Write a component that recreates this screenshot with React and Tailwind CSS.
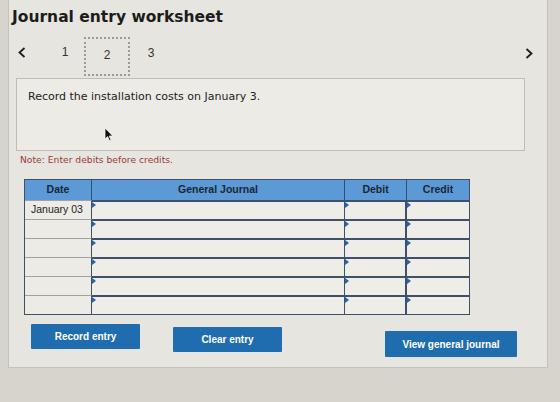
import React from "react";

const rows = ["January 03", "", "", "", "", ""];

function Marker() {
  return (
    <span className="absolute left-0 top-0 h-0 w-0 border-y-[3px] border-l-[4px] border-y-transparent border-l-[#2563b0]" />
  );
}

function Chevron({ dir }) {
  return (
    <svg width="8" height="11" viewBox="0 0 8 11" className="block">
      <polyline
        points={dir === "left" ? "6.5,1 1.5,5.5 6.5,10" : "1.5,1 6.5,5.5 1.5,10"}
        fill="none"
        stroke="#1d1d1d"
        strokeWidth="1.8"
        strokeLinejoin="miter"
      />
    </svg>
  );
}

export default function App() {
  return (
    <div className="relative h-[402px] w-[560px] overflow-hidden bg-[#d6d4cd] font-['Liberation_Sans',Arial,sans-serif] text-[#222]">
      <div className="ml-[8px] flex h-[368px] w-[540px] flex-col border-x border-b border-[#c4c2bb] bg-[#e7e5df]">
        {/* Heading */}
        <h1 className="mt-[8px] pl-[3px] font-['DejaVu_Sans',Verdana,sans-serif] text-[15.5px] font-bold leading-[18px] text-[#1c1c1c]">
          Journal entry worksheet
        </h1>

        {/* Step navigation */}
        <div className="mt-[11px] flex h-[39px] items-start">
          <div className="ml-[9px] mt-[10px]">
            <Chevron dir="left" />
          </div>
          <span className="ml-[32px] mt-[8px] w-[14px] text-center text-[12px] leading-[14px] text-[#333]">1</span>
          <div className="ml-[12px] flex h-[39px] w-[46px] justify-center border-2 border-dotted border-[#9a9a9a] pt-[9px] text-[12px] leading-[14px] text-[#333]">
            2
          </div>
          <span className="ml-[14px] mt-[9px] w-[14px] text-center text-[12px] leading-[14px] text-[#333]">3</span>
          <div className="ml-auto mr-[14px] mt-[11px]">
            <Chevron dir="right" />
          </div>
        </div>

        {/* Instruction box */}
        <div className="ml-[7px] mt-[2px] h-[73px] w-[509px] border border-[#bfbdb6] bg-[#ecebe6] pl-[11px] pt-[10px]">
          <p className="font-['DejaVu_Sans',Verdana,sans-serif] text-[11px] leading-[16px] text-[#222]">
            Record the installation costs on January 3.
          </p>
        </div>

        <p className="ml-[11px] mt-[2px] font-['DejaVu_Sans',Verdana,sans-serif] text-[9.2px] leading-[14px] text-[#9c3b35]">
          Note: Enter debits before credits.
        </p>

        {/* Journal grid */}
        <div className="ml-[15px] mt-[12px] w-[446px] border border-[#3e5168] bg-[#ecebe6]">
          <div className="grid h-[20px] grid-cols-[67px_253px_62px_62px] bg-[#5b9ad6] text-[10.5px] font-bold text-[#1b2635]">
            <div className="flex items-center justify-center border-r border-[#34506f]">Date</div>
            <div className="flex items-center justify-center border-r border-[#34506f]">General Journal</div>
            <div className="flex items-center justify-center border-r border-[#34506f]">Debit</div>
            <div className="flex items-center justify-center">Credit</div>
          </div>
          {rows.map((date, i) => (
            <div key={i} className="grid h-[19px] grid-cols-[67px_253px_62px_62px]">
              <div className="flex items-center border-r border-t border-r-[#3e5168] border-t-[#a3a19c] pl-[6px] text-[10.5px] text-[#222]">
                {date}
              </div>
              <div className="relative border-r border-t-2 border-r-[#3e5168] border-t-[#3e5168] bg-[#eeede8]">
                <Marker />
              </div>
              <div className="relative border-r-2 border-t-2 border-[#3e5168] bg-[#eeede8]">
                <Marker />
              </div>
              <div className="relative border-t-2 border-[#3e5168] bg-[#eeede8]">
                <Marker />
              </div>
            </div>
          ))}
        </div>

        {/* Actions */}
        <div className="mt-[9px] flex items-start">
          <button className="ml-[22px] h-[25px] w-[109px] rounded-[1px] bg-[#1f6cae] text-[10px] font-bold text-white">
            Record entry
          </button>
          <button className="ml-[33px] mt-[3px] h-[25px] w-[109px] rounded-[1px] bg-[#1f6cae] text-[10px] font-bold text-white">
            Clear entry
          </button>
          <button className="ml-[103px] mt-[7px] h-[26px] w-[132px] rounded-[1px] bg-[#1f6cae] text-[10px] font-bold text-white">
            View general journal
          </button>
        </div>
      </div>

      {/* Mouse pointer */}
      <svg
        width="10"
        height="15"
        viewBox="0 0 10 15"
        className="absolute left-[104px] top-[127px]"
      >
        <polygon points="1,1 1,12 3.6,9.6 5.4,13.6 7,12.9 5.2,9 8.8,9" fill="#111" stroke="#f4f4f4" strokeWidth="0.8" />
      </svg>
    </div>
  );
}
